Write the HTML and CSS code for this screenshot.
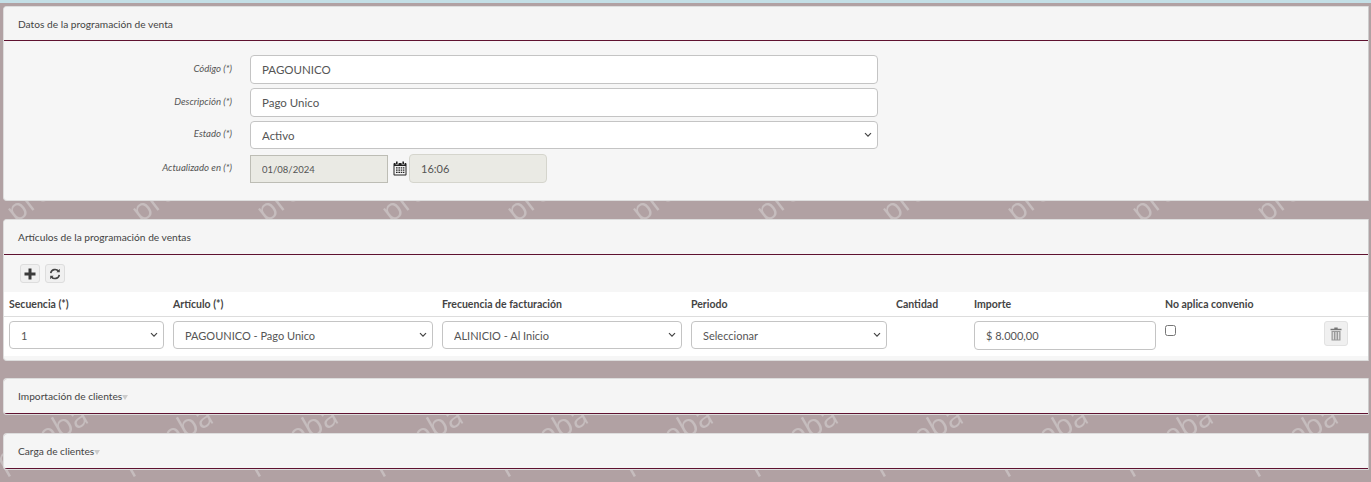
FILE: index.html
```html
<!DOCTYPE html>
<html lang="es">
<head>
<meta charset="utf-8">
<title>Programación de venta</title>
<link rel="stylesheet" href="styles.css">
</head>
<body>
<svg class="watermark" width="1371" height="482" aria-hidden="true">
  <defs>
    <pattern id="wm" width="125" height="508" patternUnits="userSpaceOnUse">
      <text class="wm-text" transform="translate(16 223.500) rotate(-38)">prueba</text>
      <text class="wm-text" transform="translate(3 472) rotate(-30)">prueba</text>
    </pattern>
  </defs>
  <rect width="1371" height="482" fill="url(#wm)"/>
</svg>
<div class="topbar"></div>
<main class="page">
  <section class="panel panel-data">
    <header class="panel-head head-data">Datos de la programación de venta</header>
    <div class="form">
      <div class="form-row row-a">
        <label class="form-label">Código (*)</label>
        <input class="control wide" type="text" value="PAGOUNICO">
      </div>
      <div class="form-row row-b">
        <label class="form-label">Descripción (*)</label>
        <input class="control wide" type="text" value="Pago Unico">
      </div>
      <div class="form-row row-c">
        <label class="form-label">Estado (*)</label>
        <select class="control wide"><option>Activo</option></select>
      </div>
      <div class="form-row row-d">
        <label class="form-label">Actualizado en (*)</label>
        <input class="date" type="text" value="01/08/2024" disabled>
        <svg class="cal" viewBox="0 0 14 15" width="14" height="15">
          <path d="M3 0.5h1.6v2.4H3zM9.4 0.5H11v2.4H9.4z" fill="#222"/>
          <path d="M1.6 2h1v1.4h3V2h3v1.4h3V2h.8c.6 0 1.1.5 1.1 1.1v10.3c0 .6-.5 1.1-1.1 1.1H1.6c-.6 0-1.1-.5-1.1-1.1V3.1C.5 2.500 1 2 1.600 2z" fill="#222"/>
          <rect x="1.500" y="5" width="11" height="8.500" fill="#f5f5f5"/>
          <path d="M3 6.200h1.600v1.300H3zM5.400 6.200H7v1.300H5.400zM7.700 6.200h1.600v1.300H7.700zM10 6.200h1.400v1.300H10zM3 8.500h1.600v1.300H3zM5.400 8.500H7v1.300H5.400zM7.700 8.500h1.600v1.300H7.700zM10 8.500h1.400v1.300H10zM3 10.800h1.600v1.300H3zM5.400 10.800H7v1.300H5.400zM7.700 10.800h1.600v1.300H7.700zM10 10.800h1.400v1.300H10z" fill="#222"/>
        </svg>
        <input class="time" type="text" value="16:06" disabled>
      </div>
    </div>
  </section>

  <section class="panel panel-items">
    <header class="panel-head head-items">Artículos de la programación de ventas</header>
    <div class="toolbar">
      <button class="tool" type="button" aria-label="Agregar">
        <svg viewBox="0 0 12 12" width="12" height="12"><path d="M4.500 0.500h3v4h4v3h-4v4h-3v-4h-4v-3h4z" fill="#3a3a3a"/></svg>
      </button>
      <button class="tool" type="button" aria-label="Actualizar">
        <svg viewBox="0 0 12 12" width="12" height="12" fill="none" stroke="#444" stroke-width="1.600"><path d="M1.700 5.200A4.400 4.400 0 0 1 9.600 3.300"/><path d="M10.300 6.800A4.400 4.400 0 0 1 2.400 8.700"/><path d="M10.800 0.800v3.400H7.400zM1.200 11.200V7.800h3.400z" fill="#444" stroke="none"/></svg>
      </button>
    </div>
    <div class="grid-table">
      <div class="grid-head">
        <span>Secuencia (*)</span>
        <span>Artículo (*)</span>
        <span>Frecuencia de facturación</span>
        <span>Periodo</span>
        <span>Cantidad</span>
        <span>Importe</span>
        <span>No aplica convenio</span>
        <span></span>
      </div>
      <div class="grid-row">
        <select class="control"><option>1</option></select>
        <select class="control"><option>PAGOUNICO - Pago Unico</option></select>
        <select class="control"><option>ALINICIO - Al Inicio</option></select>
        <select class="control"><option>Seleccionar</option></select>
        <span></span>
        <input class="control amount" type="text" value="$ 8.000,00">
        <input class="check" type="checkbox">
        <button class="trash" type="button" aria-label="Eliminar">
          <svg viewBox="0 0 12 14" width="12" height="14"><path d="M4.300 0.500h3.400v1.300h3.800v1.400H.5V1.800h3.800z" fill="#777"/><path d="M1.500 4h9v9.500h-9z" fill="#999"/><path d="M3.300 5v7.500M6 5v7.500M8.700 5v7.500" stroke="#eee" stroke-width="1"/></svg>
        </button>
      </div>
    </div>
  </section>

  <section class="panel panel-fold fold-a">
    <header class="panel-head head-fold">Importación de clientes<i class="caret"></i></header>
  </section>
  <section class="panel panel-fold fold-b">
    <header class="panel-head head-fold">Carga de clientes<i class="caret"></i></header>
  </section>
</main>
</body>
</html>
```
FILE: styles.css
```css
* { box-sizing: border-box; }
html, body { margin: 0; height: 482px; overflow: hidden; }
body {
  background: #b1a1a3;
  font-family: Lato, "Liberation Sans", sans-serif;
  color: #555;
  position: relative;
}
.watermark { position: absolute; left: 0; top: 0; }
.wm-text { font-family: "Open Sans", sans-serif; font-size: 30px; fill: #c6bdbe; }
.topbar { position: relative; height: 3px; background: #c4dfe6; }
.page { position: relative; padding: 3px 2px 0 3px; }
.panel {
  background: #f6f6f6;
  border: 1px solid #ddd;
  border-right-color: #ccc;
  border-radius: 4px 0 0 4px;
  overflow: hidden;
}
.panel-data { height: 195px; margin-bottom: 18px; }
.panel-items { height: 142px; margin-bottom: 17px; }
.panel-fold { height: 37px; background: #fff; }
.fold-a { margin-bottom: 18px; }
.panel-head {
  background: #f5f5f5;
  border-bottom: 1px solid #5f1230;
  font-size: 10.200px;
  color: #444;
  padding-left: 14px;
  display: flex;
  align-items: center;
}
.head-data { height: 34px; }
.head-items { height: 35px; }
.head-fold { height: 35px; }
.caret {
  width: 0; height: 0; margin-top: 2px;
  border-left: 3.500px solid transparent;
  border-right: 3.500px solid transparent;
  border-top: 5px solid #ccc;
}
.form { padding-top: 14px; }
.form-row { display: flex; align-items: center; }
.row-a { height: 29px; margin-bottom: 4px; }
.row-b { height: 29px; margin-bottom: 4px; }
.row-c { height: 28px; margin-bottom: 5px; }
.row-d { height: 29px; }
.form-label {
  width: 228px;
  margin-right: 18px;
  text-align: right;
  font-size: 9.600px;
  font-style: italic;
  color: #555;
  padding-bottom: 3px;
}
.control {
  height: 28px;
  background: #fff;
  border: 1px solid #c4c4c4;
  border-radius: 4px;
  font: 11.500px Lato, "Liberation Sans", sans-serif;
  color: #555;
  padding: 0 0 0 11px;
  width: 100%;
  margin: 0;
}
select.control {
  appearance: none;
  background: #fff url("data:image/svg+xml,%3Csvg xmlns='http://www.w3.org/2000/svg' width='8' height='6' viewBox='0 0 8 6'%3E%3Cpath d='M1 1.200l3 3 3-3' fill='none' stroke='%23444' stroke-width='1.200'/%3E%3C/svg%3E") no-repeat right 5px center;
}
.wide { width: 628px; }
.row-a .wide, .row-b .wide { height: 29px; }
.date {
  width: 138px; height: 28px;
  background: #eaeae4;
  border: 1px solid #bdbdb5;
  font: 9.500px Lato, sans-serif;
  color: #555;
  padding: 2px 0 0 11px;
  margin: 0;
}
.cal { margin: 0 2px 0 5px; flex: none; }
.time {
  width: 138px; height: 29px;
  background: #eaeae4;
  border: 1px solid #d5d5cd;
  border-radius: 4px;
  font: 11px Lato, sans-serif;
  color: #555;
  padding: 0 0 0 11px;
  margin: 0;
}
.toolbar { height: 37px; padding: 9px 0 0 16px; display: flex; gap: 5px; align-items: flex-start; }
.tool {
  width: 20px; height: 19px; padding: 0;
  background: #f0f0f0;
  border: 1px solid #ddd;
  border-radius: 3px;
  display: flex; align-items: center; justify-content: center;
}
.grid-table { background: #fff; height: 64px; }
.grid-head, .grid-row {
  display: grid;
  grid-template-columns: 155px 260px 240px 196px 69px 182px 150px 24px;
  column-gap: 9px;
  padding-left: 5px;
}
.grid-head {
  height: 25px;
  align-items: center;
  border-bottom: 1px solid #ddd;
  font-size: 10.500px;
  font-weight: 700;
  color: #444;
}
.grid-row { padding-top: 4px; align-items: start; }
.grid-row .control { font-size: 11px; }
.amount { height: 29px; }
.check { width: 11px; height: 11px; margin: 4px 0 0 0; }
.trash {
  width: 24px; height: 25px; padding: 0;
  background: #f0f0f0;
  border: 1px solid #e2e2e2;
  border-radius: 3px;
  display: flex; align-items: center; justify-content: center;
}
```
